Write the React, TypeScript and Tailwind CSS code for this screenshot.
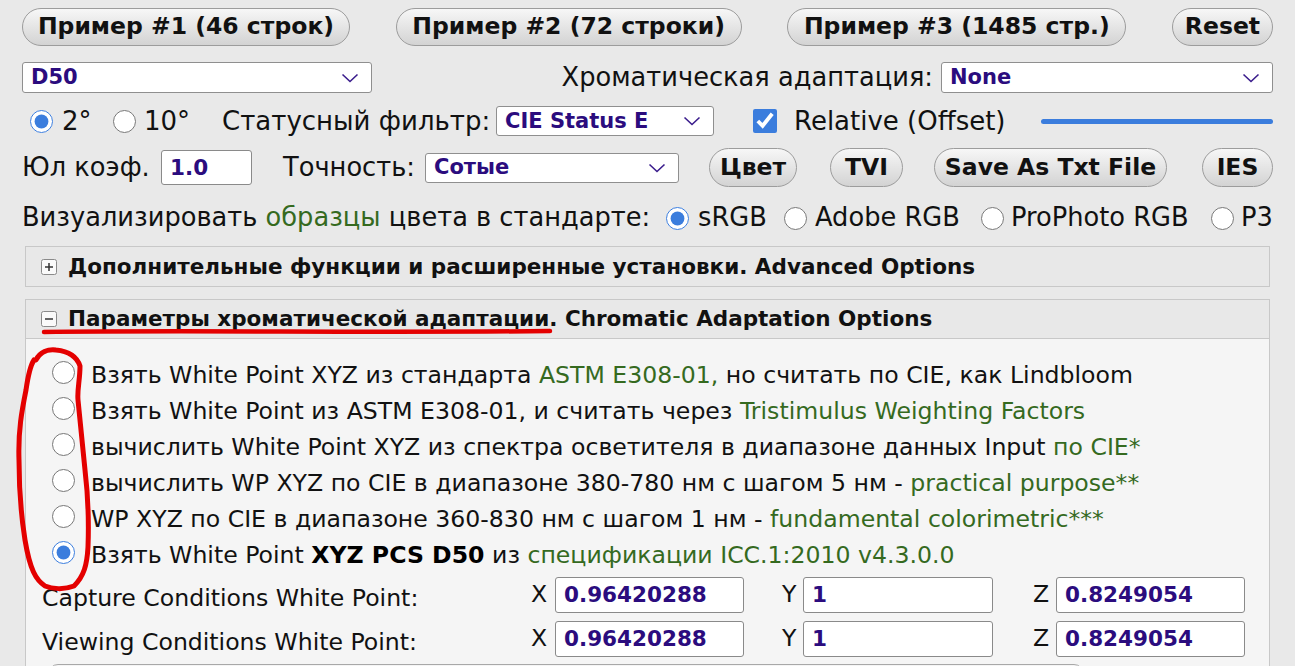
import React from 'react';

const FONT = "font-['DejaVu_Sans',sans-serif]";
const INK = 'text-[#111111]';
const PURPLE = 'text-[#2b0c7e]';
const GREEN = 'text-[#356a1f]';

function PillButton({ label, w }: { label: string; w: string }) {
	return (
		<button
			className={`${w} h-full shrink-0 rounded-full border border-[#9c9c9c] bg-linear-to-b from-[#f7f7f7] to-[#d3d3d3] font-bold text-[23.5px] ${INK} whitespace-nowrap`}
		>
			{label}
		</button>
	);
}

function Chevron() {
	return (
		<svg width="18" height="10" viewBox="0 0 18 10" className="shrink-0">
			<path d="M1.5 1.5 L9 8.5 L16.5 1.5" fill="none" stroke="#3a1c8c" strokeWidth="1.6" />
		</svg>
	);
}

function FakeSelect({ value, w, h = 'h-[31px]' }: { value: string; w: string; h?: string }) {
	return (
		<div
			className={`${w} ${h} shrink-0 flex items-center justify-between bg-white border border-[#8f8f8f] rounded-[3px] pl-[8px] pr-[12px]`}
		>
			<span className={`font-bold text-[21px] ${PURPLE}`}>{value}</span>
			<Chevron />
		</div>
	);
}

function Field({ value, w, h = 'h-[36px]' }: { value: string; w: string; h?: string }) {
	return (
		<div
			className={`${w} ${h} shrink-0 flex items-center bg-white border border-[#8a8a8a] rounded-[3px] pl-[8px] font-bold text-[21.5px] ${PURPLE}`}
		>
			{value}
		</div>
	);
}

function Radio({ checked = false, cls = '' }: { checked?: boolean; cls?: string }) {
	return (
		<input
			type="radio"
			defaultChecked={checked}
			className={`w-[23px] h-[23px] m-0 shrink-0 accent-[#3b7ddd] ${cls}`}
		/>
	);
}

function ToggleIcon({ open }: { open: boolean }) {
	return (
		<svg width="16" height="16" viewBox="0 0 16 16" className="shrink-0">
			<rect x="0.5" y="0.5" width="15" height="15" rx="2" fill="#fafafa" stroke="#8a8a8a" />
			<line x1="4" y1="8" x2="12" y2="8" stroke="#333" strokeWidth="1.5" />
			{!open && <line x1="8" y1="4" x2="8" y2="12" stroke="#333" strokeWidth="1.5" />}
		</svg>
	);
}

const options: React.ReactNode[] = [
	<>
		Взять White Point XYZ из стандарта <span className={GREEN}>ASTM E308-01,</span> но считать по CIE, как Lindbloom
	</>,
	<>
		Взять White Point из ASTM E308-01, и считать через <span className={GREEN}>Tristimulus Weighting Factors</span>
	</>,
	<>
		вычислить White Point XYZ из спектра осветителя в диапазоне данных Input <span className={GREEN}>по CIE*</span>
	</>,
	<>
		вычислить WP XYZ по CIE в диапазоне 380-780 нм с шагом 5 нм - <span className={GREEN}>practical purpose**</span>
	</>,
	<>
		WP XYZ по CIE в диапазоне 360-830 нм с шагом 1 нм - <span className={GREEN}>fundamental colorimetric***</span>
	</>,
	<>
		Взять White Point <b className="text-black">XYZ PCS D50</b> из{' '}
		<span className={GREEN}>спецификации ICC.1:2010 v4.3.0.0</span>
	</>,
];

function WhitePointRow({ label, mt }: { label: string; mt: string }) {
	return (
		<div className={`flex items-center h-[36px] ${mt}`}>
			<span className="w-[489px] shrink-0 whitespace-nowrap pt-[8px]">{label}</span>
			<span className="w-[24px] shrink-0">X</span>
			<Field value="0.96420288" w="w-[189px]" />
			<span className="ml-[38px] w-[21px] shrink-0">Y</span>
			<Field value="1" w="w-[190px]" />
			<span className="ml-[40px] w-[23px] shrink-0">Z</span>
			<Field value="0.8249054" w="w-[189px]" />
		</div>
	);
}

export default function App() {
	return (
		<div className={`relative w-[1295px] h-[666px] overflow-hidden bg-[#e9e9e9] ${FONT} ${INK} text-[23.6px] leading-none`}>
			<div className="px-[22px] pt-[8px] text-[25.7px]">
				{/* top buttons */}
				<div className="flex justify-between h-[38px]">
					<PillButton label="Пример #1 (46 строк)" w="w-[328px]" />
					<PillButton label="Пример #2 (72 строки)" w="w-[346px]" />
					<PillButton label="Пример #3 (1485 стр.)" w="w-[339px]" />
					<PillButton label="Reset" w="w-[101px]" />
				</div>

				{/* illuminant + adaptation */}
				<div className="flex items-center mt-[16px] h-[31px]">
					<FakeSelect value="D50" w="w-[350px]" />
					<span className="ml-auto whitespace-nowrap">Хроматическая адаптация:</span>
					<div className="ml-[8px]">
						<FakeSelect value="None" w="w-[332px]" />
					</div>
				</div>

				{/* observer, status filter */}
				<div className="flex items-center mt-[12px] h-[32px] text-[26px] whitespace-nowrap">
					<Radio checked cls="ml-[8px]" />
					<span className="ml-[9px] w-[51px] shrink-0">2°</span>
					<Radio />
					<span className="ml-[8px] w-[78px] shrink-0">10°</span>
					<span className="w-[274px] shrink-0">Статусный фильтр:</span>
					<FakeSelect value="CIE Status E" w="w-[218px]" h="h-[30px]" />
					<input
						type="checkbox"
						defaultChecked
						className="ml-[39px] w-[24px] h-[24px] m-0 shrink-0 accent-[#3b7ddd]"
					/>
					<span className="ml-[17px] w-[247px] shrink-0">Relative (Offset)</span>
					<div className="w-[232px] h-[5px] rounded-full bg-[#3b7ddd]" />
				</div>

				{/* yule, precision, actions */}
				<div className="flex items-center mt-[11px] h-[39px] whitespace-nowrap">
					<span className="w-[139px] shrink-0">Юл коэф.</span>
					<Field value="1.0" w="w-[91px]" h="h-[35px]" />
					<span className="ml-[31px] w-[142px] shrink-0">Точность:</span>
					<FakeSelect value="Сотые" w="w-[254px]" h="h-[30px]" />
					<div className="ml-[30px] flex h-full gap-[33px]">
						<PillButton label="Цвет" w="w-[88px]" />
						<PillButton label="TVI" w="w-[73px]" />
					</div>
					<div className="ml-[31px] h-full">
						<PillButton label="Save As Txt File" w="w-[233px]" />
					</div>
					<div className="ml-[35px] h-full">
						<PillButton label="IES" w="w-[71px]" />
					</div>
				</div>

				{/* visualize */}
				<div className="flex items-center mt-[16px] h-[30px] whitespace-nowrap">
					<span className="flex-1">
						Визуализировать <span className={GREEN}>образцы</span> цвета в стандарте:
					</span>
					<Radio checked />
					<span className="ml-[9px] w-[86px] shrink-0">sRGB</span>
					<Radio />
					<span className="ml-[8px] w-[166px] shrink-0">Adobe RGB</span>
					<Radio />
					<span className="ml-[7px] w-[200px] shrink-0">ProPhoto RGB</span>
					<Radio />
					<span className="ml-[7px] w-[32px] shrink-0">P3</span>
				</div>
			</div>

			{/* accordions */}
			<div className="ml-[25px] w-[1245px] mt-[13px]">
				<div className="h-[41px] flex items-center border border-[#c8c8c8] bg-[#e8e8e8] pl-[15px] gap-[11px]">
					<ToggleIcon open={false} />
					<span className="font-bold text-[21.5px] whitespace-nowrap">
						Дополнительные функции и расширенные установки. Advanced Options
					</span>
				</div>

				<div className="mt-[12px] border border-[#c8c8c8]">
					<div className="h-[39px] flex items-center bg-[#e8e8e8] border-b border-[#c8c8c8] pl-[15px] gap-[11px]">
						<ToggleIcon open />
						<span className="font-bold text-[21.5px] whitespace-nowrap">
							Параметры хроматической адаптации. Chromatic Adaptation Options
						</span>
					</div>
					<div className="bg-[#f5f5f5] pt-[15px] pl-[16px] pb-[40px]">
						<div className="flex flex-col">
							{options.map((o, i) => (
								<div key={i} className="flex items-center h-[36px]">
									<Radio checked={i === 5} cls="ml-[10px]" />
									<span className="ml-[16px] whitespace-nowrap pt-[7px]">{o}</span>
								</div>
							))}
						</div>
						<WhitePointRow label="Capture Conditions White Point:" mt="mt-[7px]" />
						<WhitePointRow label="Viewing Conditions White Point:" mt="mt-[8px]" />
						<div className="ml-[6px] mt-[7px] w-[1036px] h-[40px] rounded-t-[10px] border border-[#a8a8a8] bg-[#f5f5f5]" />
					</div>
				</div>
			</div>

			{/* hand-drawn red annotation */}
			<svg
				className="absolute left-0 top-0 pointer-events-none"
				width="1295"
				height="666"
				viewBox="0 0 1295 666"
			>
				<g fill="none" stroke="#e40000" strokeLinecap="round" strokeLinejoin="round" style={{ filter: 'blur(0.6px)' }}>
					<path d="M44 332 C 180 330, 380 333, 550 331" strokeWidth="4.5" />
					<path
						d="M36 360 C 40 352, 48 349, 56 350 C 66 351, 76 354, 80 366 C 80 380, 77 390, 78 400 C 80 420, 82 440, 85 470 C 88 495, 89 520, 88 547 C 87 565, 84 576, 74 586 C 64 590, 52 589, 45 586 C 36 580, 30 570, 25 540 C 21 515, 19 490, 19 460 C 18 430, 22 410, 26 390 C 28 376, 30 366, 34 360"
						strokeWidth="5"
					/>
				</g>
			</svg>
		</div>
	);
}
